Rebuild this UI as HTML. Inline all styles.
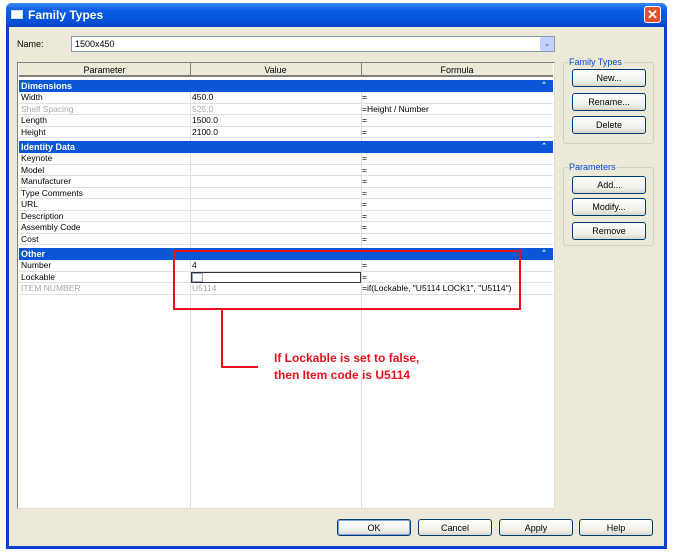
<!DOCTYPE html>
<html><head><style>
*{box-sizing:border-box;margin:0;padding:0}
body{width:673px;height:554px;background:#fff;position:relative;overflow:hidden;font-family:"Liberation Sans",Tahoma,sans-serif;font-size:9px;color:#000}
.a{position:absolute}
.win{left:6px;top:3px;width:661px;height:546px;background:#0a3fd0;border-radius:6px 6px 0 0}
.title{left:6px;top:3px;width:661px;height:24px;border-radius:6px 6px 0 0;background:linear-gradient(#3a8af5,#0a5ee6 30%,#0553da 70%,#0a46c8)}
.body{left:9px;top:27px;width:655px;height:519px;background:#ece9d8}
.btn{position:absolute;border:1px solid #003c74;border-radius:3px;background:linear-gradient(#fff,#f0efe8 70%,#d8d6c8);text-align:center;font-size:9px;line-height:16px}
.row{position:absolute;left:19px;width:534px;height:11.5px;border-bottom:1px solid #e0e0e0;font-size:8.5px;line-height:11px}
.row span{position:absolute;top:0}
.hdr{position:absolute;left:19px;width:534px;height:12px;background:#0a56d6;color:#fff;font-weight:bold;font-size:9px;line-height:12px;padding-left:2px}
.hdr i{position:absolute;right:6px;font-style:normal;font-size:7px}
.g{color:#a8a8a8}
</style></head><body>
<div class="a win"></div>
<div class="a title"></div>
<div class="a" style="left:11px;top:10px;width:12px;height:9px;background:#fff;border:1px solid #cde"></div>
<div class="a" style="left:28px;top:8px;color:#fff;font-weight:bold;font-size:12px">Family Types</div>
<div class="a" style="left:644px;top:6px;width:17px;height:17px;background:#e2512c;border:1px solid #fff;border-radius:3px;color:#fff;font-weight:bold;font-size:13px;line-height:15px;text-align:center">✕</div>
<div class="a body"></div>
<div class="a" style="left:17px;top:39px;font-size:9px">Name:</div>
<div class="a" style="left:71px;top:36px;width:484px;height:16px;background:#fff;border:1px solid #7f9db9;font-size:9px;line-height:14px;padding-left:3px">1500x450</div>
<div class="a" style="left:540px;top:37px;width:14px;height:14px;background:#c1d3fb;border-radius:2px;color:#4d6185;font-size:8px;text-align:center;line-height:14px">⌄</div>
<!-- grid -->
<div class="a" style="left:17px;top:62px;width:538px;height:447px;background:#fff;border:1px solid #808080;border-right-color:#ddd;border-bottom-color:#ddd"></div>
<div class="a" style="left:19px;top:63px;width:534px;height:14px;background:#ece9d8;border-bottom:2px solid #808080"></div>
<div class="a" style="left:190px;top:63px;width:1px;height:13px;background:#808080"></div>
<div class="a" style="left:361px;top:63px;width:1px;height:13px;background:#808080"></div>
<div class="a" style="left:19px;top:65px;width:171px;text-align:center;font-size:9px">Parameter</div>
<div class="a" style="left:190px;top:65px;width:171px;text-align:center;font-size:9px">Value</div>
<div class="a" style="left:361px;top:65px;width:192px;text-align:center;font-size:9px">Formula</div>
<div class="a" style="left:190px;top:79px;width:1px;height:429px;background:#ddd"></div>
<div class="a" style="left:361px;top:79px;width:1px;height:429px;background:#ddd"></div>

<div class="hdr" style="top:80px">Dimensions<i>&#8963;</i></div>
<div class="row" style="top:92px"><span style="left:2px">Width</span><span style="left:173px">450.0</span><span style="left:343px">=</span></div>
<div class="row g" style="top:103.5px"><span style="left:2px">Shelf Spacing</span><span style="left:173px">525.0</span><span style="left:343px;color:#000">=Height / Number</span></div>
<div class="row" style="top:115px"><span style="left:2px">Length</span><span style="left:173px">1500.0</span><span style="left:343px">=</span></div>
<div class="row" style="top:126.5px"><span style="left:2px">Height</span><span style="left:173px">2100.0</span><span style="left:343px">=</span></div>
<div class="hdr" style="top:141px">Identity Data<i>&#8963;</i></div>
<div class="row" style="top:153px"><span style="left:2px">Keynote</span><span style="left:343px">=</span></div>
<div class="row" style="top:164.5px"><span style="left:2px">Model</span><span style="left:343px">=</span></div>
<div class="row" style="top:176px"><span style="left:2px">Manufacturer</span><span style="left:343px">=</span></div>
<div class="row" style="top:187.5px"><span style="left:2px">Type Comments</span><span style="left:343px">=</span></div>
<div class="row" style="top:199px"><span style="left:2px">URL</span><span style="left:343px">=</span></div>
<div class="row" style="top:210.5px"><span style="left:2px">Description</span><span style="left:343px">=</span></div>
<div class="row" style="top:222px"><span style="left:2px">Assembly Code</span><span style="left:343px">=</span></div>
<div class="row" style="top:233.5px"><span style="left:2px">Cost</span><span style="left:343px">=</span></div>
<div class="hdr" style="top:248px">Other<i>&#8963;</i></div>
<div class="row" style="top:260px"><span style="left:2px">Number</span><span style="left:173px">4</span><span style="left:343px">=</span></div>
<div class="row" style="top:271.5px"><span style="left:2px">Lockable</span><span style="left:343px">=</span></div>
<div class="a" style="left:191px;top:272px;width:170px;height:11px;border:1px solid #333;background:#fff"></div>
<div class="a" style="left:192px;top:273px;width:11px;height:9px;border:1px solid #8fa8c8"></div>
<div class="row g" style="top:283px"><span style="left:2px">ITEM NUMBER</span><span style="left:173px">U5114</span><span style="left:343px;color:#000">=if(Lockable, "U5114 LOCK1", "U5114")</span></div>
<!-- red annotation -->
<div class="a" style="left:173px;top:250px;width:348px;height:60px;border:2px solid #e8101c"></div>
<div class="a" style="left:221px;top:309px;width:2px;height:59px;background:#e8101c"></div>
<div class="a" style="left:221px;top:366px;width:37px;height:2px;background:#e8101c"></div>
<div class="a" style="left:274px;top:350px;color:#e8101c;font-weight:bold;font-size:12px;line-height:17px">If Lockable is set to false,<br>then Item code is U5114</div>
<!-- right panel -->
<div class="a" style="left:563px;top:62px;width:91px;height:82px;border:1px solid #d0d0bf;border-radius:3px"></div>
<div class="a" style="left:568px;top:57px;background:#ece9d8;color:#0046d5;font-size:9px;padding:0 1px">Family Types</div>
<div class="btn" style="left:572px;top:69px;width:74px;height:18px">New...</div>
<div class="btn" style="left:572px;top:93px;width:74px;height:18px">Rename...</div>
<div class="btn" style="left:572px;top:116px;width:74px;height:18px">Delete</div>
<div class="a" style="left:563px;top:167px;width:91px;height:79px;border:1px solid #d0d0bf;border-radius:3px"></div>
<div class="a" style="left:568px;top:162px;background:#ece9d8;color:#0046d5;font-size:9px;padding:0 1px">Parameters</div>
<div class="btn" style="left:572px;top:176px;width:74px;height:18px">Add...</div>
<div class="btn" style="left:572px;top:198px;width:74px;height:18px">Modify...</div>
<div class="btn" style="left:572px;top:222px;width:74px;height:18px">Remove</div>
<!-- bottom -->
<div class="btn" style="left:337px;top:519px;width:74px;height:17px;box-shadow:inset 0 0 0 1px #7ba3e8">OK</div>
<div class="btn" style="left:418px;top:519px;width:74px;height:17px">Cancel</div>
<div class="btn" style="left:499px;top:519px;width:74px;height:17px">Apply</div>
<div class="btn" style="left:579px;top:519px;width:74px;height:17px">Help</div>
</body></html>
